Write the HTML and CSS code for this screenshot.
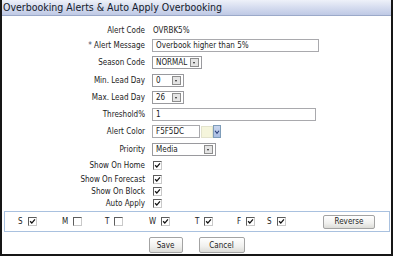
FILE: index.html
```html
<!DOCTYPE html>
<html>
<head>
<meta charset="utf-8">
<link rel="stylesheet" href="styles.css">
</head>
<body>
<div class="panel">
  <div class="title">Overbooking Alerts &amp; Auto Apply Overbooking</div>
  <div class="form">
    <div class="lbl">Alert Code</div>
    <div class="val"><span class="plain">OVRBK5%</span></div>

    <div class="lbl"><span class="req">*</span>&nbsp;Alert Message</div>
    <div class="val"><div class="txt w-msg">Overbook higher than 5%</div></div>

    <div class="lbl">Season Code</div>
    <div class="val"><div class="sel w-season"><span>NORMAL</span><span class="arrow"></span></div></div>

    <div class="lbl">Min. Lead Day</div>
    <div class="val"><div class="sel w-day"><span>0</span><span class="arrow"></span></div></div>

    <div class="lbl">Max. Lead Day</div>
    <div class="val"><div class="sel w-day"><span>26</span><span class="arrow"></span></div></div>

    <div class="lbl">Threshold%</div>
    <div class="val"><div class="txt w-thr">1</div></div>

    <div class="lbl">Alert Color</div>
    <div class="val color">
      <div class="txt w-color">F5F5DC</div>
      <span class="swatch"></span>
      <span class="pick"><svg width="7" height="12" viewBox="0 0 7 12"><polyline points="1.2,4.5 3.5,7.5 5.8,4.5" fill="none" stroke="#2a3f7a" stroke-width="1.3"/></svg></span>
    </div>

    <div class="lbl">Priority</div>
    <div class="val"><div class="sel w-prio"><span>Media</span><span class="arrow"></span></div></div>

    <div class="lbl">Show On Home</div>
    <div class="val"><span class="cb on"><svg viewBox="0 0 8 8"><polyline points="1.3,3.8 3.2,5.8 6.8,1.6" fill="none" stroke="#111" stroke-width="1.5"/></svg></span></div>

    <div class="lbl">Show On Forecast</div>
    <div class="val"><span class="cb on"><svg viewBox="0 0 8 8"><polyline points="1.3,3.8 3.2,5.8 6.8,1.6" fill="none" stroke="#111" stroke-width="1.5"/></svg></span></div>

    <div class="lbl">Show On Block</div>
    <div class="val"><span class="cb on"><svg viewBox="0 0 8 8"><polyline points="1.3,3.8 3.2,5.8 6.8,1.6" fill="none" stroke="#111" stroke-width="1.5"/></svg></span></div>

    <div class="lbl">Auto Apply</div>
    <div class="val"><span class="cb on"><svg viewBox="0 0 8 8"><polyline points="1.3,3.8 3.2,5.8 6.8,1.6" fill="none" stroke="#111" stroke-width="1.5"/></svg></span></div>
  </div>

  <div class="days">
    <div class="day"><span>S</span><span class="cb on"><svg viewBox="0 0 8 8"><polyline points="1.3,3.8 3.2,5.8 6.8,1.6" fill="none" stroke="#111" stroke-width="1.5"/></svg></span></div>
    <div class="day"><span>M</span><span class="cb"></span></div>
    <div class="day"><span>T</span><span class="cb"></span></div>
    <div class="day"><span>W</span><span class="cb on"><svg viewBox="0 0 8 8"><polyline points="1.3,3.8 3.2,5.8 6.8,1.6" fill="none" stroke="#111" stroke-width="1.5"/></svg></span></div>
    <div class="day"><span>T</span><span class="cb on"><svg viewBox="0 0 8 8"><polyline points="1.3,3.8 3.2,5.8 6.8,1.6" fill="none" stroke="#111" stroke-width="1.5"/></svg></span></div>
    <div class="day"><span>F</span><span class="cb on"><svg viewBox="0 0 8 8"><polyline points="1.3,3.8 3.2,5.8 6.8,1.6" fill="none" stroke="#111" stroke-width="1.5"/></svg></span></div>
    <div class="day"><span>S</span><span class="cb on"><svg viewBox="0 0 8 8"><polyline points="1.3,3.8 3.2,5.8 6.8,1.6" fill="none" stroke="#111" stroke-width="1.5"/></svg></span></div>
    <div class="day"><span class="btn rev">Reverse</span></div>
  </div>

  <div class="actions">
    <span class="btn save">Save</span>
    <span class="btn cancel">Cancel</span>
  </div>
</div>
</body>
</html>
```

FILE: styles.css
```css
html, body {
  margin: 0;
  padding: 0;
  background: #ffffff;
}
body {
  font-family: "DejaVu Sans Condensed", "Liberation Sans", sans-serif;
  font-size: 8px;
  color: #1b1b1b;
}
.panel {
  box-sizing: border-box;
  width: 393px;
  height: 256px;
  border-left: 2px solid #161616;
  border-right: 2px solid #161616;
  border-bottom: 2px solid #161616;
  overflow: hidden;
}
.title {
  height: 15px;
  line-height: 15px;
  padding-left: 1px;
  font-size: 10.5px;
  color: #141a2c;
  background: linear-gradient(#eef1f9, #d3daee 55%, #bfc9e5);
  border-bottom: 1px solid #9ba9c9;
  white-space: nowrap;
}
.form {
  display: grid;
  grid-template-columns: 143px 1fr;
  grid-template-rows: 14px 16px 19px 17px 17px 17px 17px 18px 15px 12px 12px 13px;
  column-gap: 7px;
  margin-top: 7px;
}
.lbl {
  display: flex;
  align-items: center;
  justify-content: flex-end;
  white-space: nowrap;
}
.req {
  color: #3b4a6b;
}
.val {
  display: flex;
  align-items: center;
}
.plain {
  padding-left: 1px;
}
.txt {
  box-sizing: border-box;
  height: 13px;
  line-height: 11px;
  padding-left: 3px;
  border: 1px solid #a9a9ad;
  background: #fff;
  white-space: nowrap;
}
.w-msg { width: 167px; }
.w-thr { width: 164px; }
.w-color { width: 48px; }
.color .swatch {
  width: 12px;
  height: 12px;
  margin-left: 1px;
  background: #f5f5dc;
  border: 1px solid #e3e3cd;
  box-sizing: border-box;
}
.color .pick {
  box-sizing: border-box;
  width: 8px;
  height: 13px;
  display: flex;
  align-items: center;
  justify-content: center;
  background: linear-gradient(#c9d6ee, #a9bde2);
  border: 1px solid #7f9db9;
}
.sel {
  box-sizing: border-box;
  height: 13px;
  border: 1px solid #9a9a9e;
  background: #fff;
  display: flex;
  align-items: center;
  justify-content: space-between;
  padding-left: 3px;
  padding-right: 2px;
}
.w-season { width: 50px; }
.w-day { width: 32px; }
.w-prio { width: 64px; }
.arrow {
  box-sizing: border-box;
  width: 9px;
  height: 9px;
  background: #e4e4e4;
  border: 1px solid #8d8d8d;
  position: relative;
}
.arrow::after {
  content: "";
  position: absolute;
  left: 2px;
  top: 3px;
  border-left: 1.5px solid transparent;
  border-right: 1.5px solid transparent;
  border-top: 2px solid #222;
}
.cb {
  box-sizing: border-box;
  display: inline-block;
  width: 9px;
  height: 9px;
  background: #fff;
  border-top: 1px solid #5d5d5d;
  border-left: 1px solid #5d5d5d;
  border-right: 1px solid #c9c9c9;
  border-bottom: 1px solid #c9c9c9;
  margin-left: 1px;
}
.cb svg {
  display: block;
  width: 7px;
  height: 7px;
}
.days {
  box-sizing: border-box;
  margin: 1px 0 0 2px;
  width: 386px;
  height: 21px;
  border: 1px solid #a9c1df;
  display: grid;
  grid-template-columns: 44px 43px 44px 46px 42px 30px 56px auto;
  align-items: center;
  padding-left: 13px;
}
.day {
  display: flex;
  align-items: center;
  gap: 4px;
}
.btn {
  box-sizing: border-box;
  display: inline-flex;
  align-items: center;
  justify-content: center;
  border: 1px solid #a3a3a3;
  border-radius: 2px;
  background: linear-gradient(#ffffff, #f0f0ee 60%, #dcdcd8);
  color: #1b1b1b;
}
.rev {
  width: 52px;
  height: 14px;
}
.actions {
  display: flex;
  justify-content: center;
  gap: 16px;
  margin-top: 5px;
}
.save {
  width: 34px;
  height: 16px;
}
.cancel {
  width: 46px;
  height: 16px;
}
```
